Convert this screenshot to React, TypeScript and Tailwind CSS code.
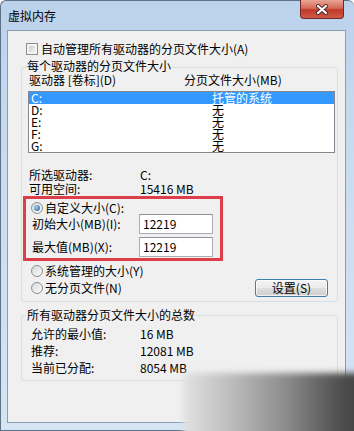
import React from "react";

function Radio({ checked }: { checked?: boolean }) {
  return (
    <div className="w-[12px] h-[12px] shrink-0 rounded-full border border-[#8e8f8f] bg-[linear-gradient(135deg,#d8d8d8,#fbfbfb)] flex items-center justify-center">
      {checked && (
        <div className="w-[6px] h-[6px] rounded-full bg-[radial-gradient(circle_at_35%_35%,#9fd3f7,#1b5a98)]" />
      )}
    </div>
  );
}

function Checkbox() {
  return (
    <div className="w-[12px] h-[12px] shrink-0 border border-[#8e8f8f] bg-[#f4f4f4] p-[2px]">
      <div className="w-full h-full bg-[linear-gradient(135deg,#cdcdcd,#f2f2f2)]" />
    </div>
  );
}

const drives: [string, string][] = [
  ["C:", "托管的系统"],
  ["D:", "无"],
  ["E:", "无"],
  ["F:", "无"],
  ["G:", "无"],
];

export default function App() {
  return (
    <div className="w-[354px] h-[431px] relative overflow-hidden bg-white font-['Noto_Sans_CJK_SC',sans-serif] text-[12px] text-black">
      <div className="w-[354px] h-[431px] flex flex-col rounded-t-[6px] border-l border-t border-b border-[#5d7188] bg-[linear-gradient(180deg,#bcd2eb,#cadcf0_40%,#d6e4f3)]">
        {/* title bar */}
        <div className="h-[29px] pl-[7px] flex items-center">
          <span className="leading-[14px] text-[12px]">虚拟内存</span>
        </div>
        {/* client area */}
        <div className="ml-[6px] w-[339px] h-[393px] border border-[#8b9db3] bg-[#f0f0f0] flex flex-col">
          <div className="mt-[11px] h-[14px] pl-[18px] flex items-center gap-[3px]">
            <Checkbox />
            <span className="leading-[14px]">自动管理所有驱动器的分页文件大小(A)</span>
          </div>

          {/* group 1 */}
          <div className="relative mt-[11px] ml-[13px] w-[317px] border border-[#d5dfe5] rounded-[3px] pb-[4px] flex flex-col">
            <span className="absolute -top-[9px] left-[5px] bg-[#f0f0f0] leading-[14px] pr-[1px]">
              每个驱动器的分页文件大小
            </span>
            <div className="mt-[5px] h-[14px] pl-[7px] flex items-center">
              <span className="w-[155px] leading-[14px]">驱动器 [卷标](D)</span>
              <span className="leading-[14px]">分页文件大小(MB)</span>
            </div>
            <div className="mt-[4px] ml-[6px] w-[307px] h-[62px] border border-[#828790] bg-white flex flex-col">
              {drives.map(([d, s], i) => (
                <div
                  key={d}
                  className={
                    "h-[12px] grid grid-cols-[183px_1fr] leading-[12px] " +
                    (i === 0 ? "bg-[#3399ff] text-white" : "")
                  }
                >
                  <span className="pl-[2px]">{d}</span>
                  <span>{s}</span>
                </div>
              ))}
            </div>
            <div className="mt-[15px] h-[14px] pl-[7px] flex items-center">
              <span className="w-[111px] leading-[14px]">所选驱动器:</span>
              <span className="leading-[14px]">C:</span>
            </div>
            <div className="h-[13px] pl-[7px] flex items-center">
              <span className="w-[111px] leading-[14px]">可用空间:</span>
              <span className="leading-[14px]">15416 MB</span>
            </div>

            {/* red annotation box */}
            <div className="mt-[1px] ml-[1px] w-[200px] border-[3px] border-[#dc3f4a] pb-[1px] flex flex-col">
              <div className="mt-[3px] h-[12px] pl-[5px] flex items-center gap-[2px]">
                <Radio checked />
                <span className="leading-[14px]">自定义大小(C):</span>
              </div>
              <div className="h-[20px] pl-[6px] flex items-center">
                <span className="w-[107px] leading-[14px]">初始大小(MB)(I):</span>
                <div className="w-[74px] h-[20px] border border-[#abadb3] border-t-[#8f949c] bg-white pl-[3px] flex items-center leading-[14px]">
                  12219
                </div>
              </div>
              <div className="mt-[3px] h-[20px] pl-[6px] flex items-center">
                <span className="w-[107px] leading-[14px]">最大值(MB)(X):</span>
                <div className="w-[74px] h-[20px] border border-[#abadb3] border-t-[#8f949c] bg-white pl-[3px] flex items-center leading-[14px]">
                  12219
                </div>
              </div>
            </div>

            <div className="mt-[3px] h-[14px] pl-[9px] flex items-center gap-[2px]">
              <Radio />
              <span className="leading-[14px]">系统管理的大小(Y)</span>
            </div>
            <div className="mt-[1px] h-[18px] pl-[9px] pr-[9px] flex items-center justify-between">
              <div className="flex items-center gap-[2px]">
                <Radio />
                <span className="leading-[14px]">无分页文件(N)</span>
              </div>
              <div className="w-[73px] h-[18px] rounded-[3px] border border-[#3c7fb1] bg-[linear-gradient(180deg,#f3f3f3,#ebebeb_48%,#dddddd_52%,#cfcfcf)] flex items-center justify-center leading-[14px] shadow-[inset_0_0_0_1px_rgba(255,255,255,0.7)]">
                设置(S)
              </div>
            </div>
          </div>

          {/* group 2 */}
          <div className="relative mt-[13px] ml-[13px] w-[317px] border border-[#d5dfe5] rounded-[3px] pb-[5px] flex flex-col">
            <span className="absolute -top-[8px] left-[5px] bg-[#f0f0f0] leading-[14px] pr-[1px]">
              所有驱动器分页文件大小的总数
            </span>
            <div className="mt-[11px] h-[14px] pl-[9px] flex items-center">
              <span className="w-[109px] leading-[14px]">允许的最小值:</span>
              <span className="leading-[14px]">16 MB</span>
            </div>
            <div className="mt-[3px] h-[14px] pl-[9px] flex items-center">
              <span className="w-[109px] leading-[14px]">推荐:</span>
              <span className="leading-[14px]">12081 MB</span>
            </div>
            <div className="mt-[3px] h-[14px] pl-[9px] flex items-center">
              <span className="w-[109px] leading-[14px]">当前已分配:</span>
              <span className="leading-[14px]">8054 MB</span>
            </div>
          </div>
        </div>
      </div>

      {/* close button */}
      <div className="absolute top-0 right-[10px] w-[44px] h-[19px] rounded-b-[4px] border border-t-0 border-[#6e2b26] bg-[linear-gradient(180deg,#e9a696,#d46a5a_45%,#c0392c_55%,#d25a48)] flex items-center justify-center">
        <svg width="14" height="11" viewBox="0 0 14 11">
          <path d="M3 2 L11 9 M11 2 L3 9" stroke="#4a2a28" strokeWidth="4" strokeLinecap="round" />
          <path d="M3 2 L11 9 M11 2 L3 9" stroke="#ffffff" strokeWidth="2.2" strokeLinecap="round" />
        </svg>
      </div>

      {/* blurred watermark overlay */}
      <div className="absolute left-[183px] top-[373px] w-[190px] h-[70px] blur-[3px] bg-[linear-gradient(90deg,#e2e2e2,#bdbdbd_25%,#8a8a8a_55%,#505050_82%,#3a3a3a)]" />
    </div>
  );
}
